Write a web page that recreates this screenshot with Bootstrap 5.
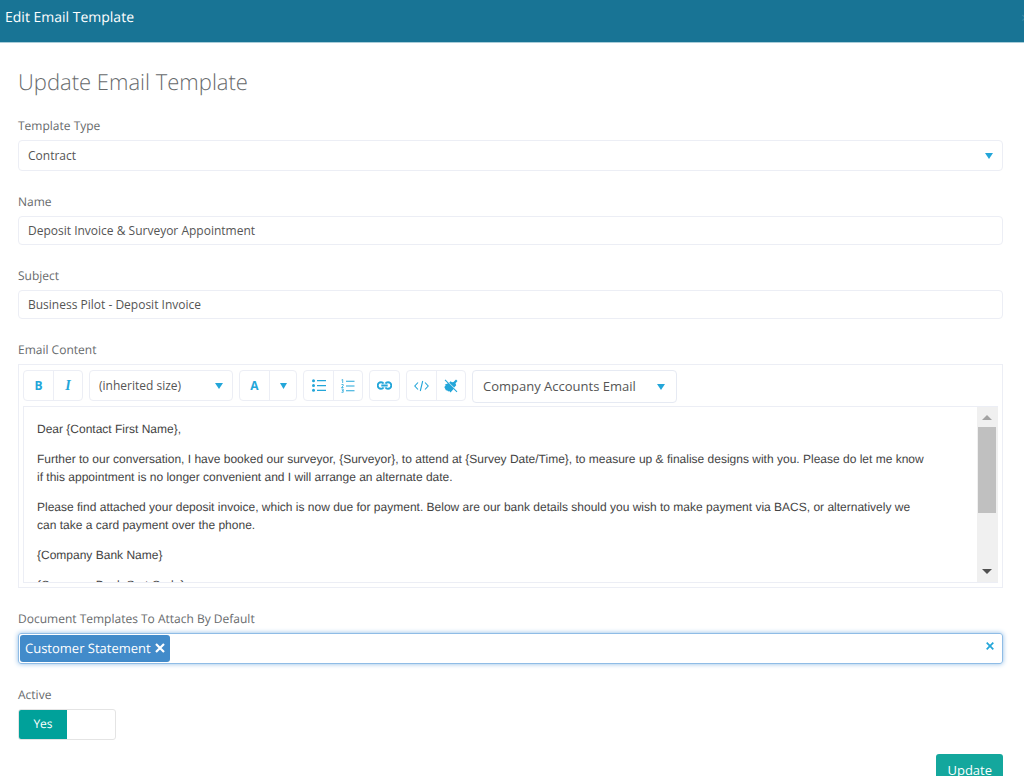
<!DOCTYPE html>
<html lang="en">
<head>
<meta charset="utf-8">
<meta name="viewport" content="width=device-width, initial-scale=1">
<title>Edit Email Template</title>
<link href="https://cdn.jsdelivr.net/npm/bootstrap@5.3.0/dist/css/bootstrap.min.css" rel="stylesheet">
<style>
:root{--accent:#23a6d9;--line:#eceef5}
html{scrollbar-width:none}
body{font-family:"Open Sans",sans-serif;font-size:12px;line-height:20px;color:#676a6c;background:#fff;text-rendering:geometricPrecision}
.title-bar{background:#187495;color:#fff;border-bottom:1px solid #a9cdd9;font-size:14px;padding:8px 0 14px 5px}
.title-bar button{color:#3d8ba6;background:none;border:0;padding:0;width:3px;line-height:16px}
.page-body{padding:24px 21px 12px 18px}
.page-body h1{font-size:22px;font-weight:300;line-height:30px;margin:0 0 19px}
.field{margin-bottom:21px}
.field-label{display:block;margin-bottom:4px;line-height:20px}
.form-control,.form-select{font-size:12px;line-height:19px;color:#555;border-color:var(--line);border-radius:4px;padding:4px 9px}
.form-select{background-image:url("data:image/svg+xml,%3Csvg xmlns='http://www.w3.org/2000/svg' viewBox='0 0 8 6'%3E%3Cpath fill='%2323a6d9' d='M0 0h8L4 6z'/%3E%3C/svg%3E");background-size:8px 6px;background-position:right 9px center}
.type-select{height:31px}
.editor{border:1px solid var(--line);padding:5px 4px 4px}
.tools{min-height:36px;gap:6px}
.tool-group{display:flex;border:1px solid var(--line);border-radius:4px;height:31px}
.tool-group button{width:29px;padding:0;border:0;background:none;color:var(--accent);display:flex;align-items:center;justify-content:center;font-size:12px;font-weight:700}
.tool-group button+button{border-left:1px solid var(--line)}
.tool-group .drop-arrow{width:27px}
.tool-group .serif-i{font-family:"Liberation Serif",serif;font-style:italic;font-size:14px}
.size-select{width:144px;height:31px}
.account-select{width:205px;height:33px;font-size:13px;padding-left:10px;background-position:right 11px center;border:1px solid #e6eaf3}
.writing{border:1px solid var(--line);border-right:0;height:177px}
.message{padding:13px 46px 0 13px;font:12px/18px "Liberation Sans",sans-serif;color:#444;overflow:hidden;outline:0}
.message p{margin:0 0 12px}
.scroller{width:21px;background:#f0f0f0;padding:0 2px 0 1px}
.scroller svg{display:block;width:100%;height:20px}
.scroller .thumb{background:#c0c0c0;height:86px}
.tag-box{border:1px solid #8fbce6;border-radius:3px;box-shadow:0 0 5px #8fbce6;height:31px;padding:1px 8px 1px 1px}
.chip{background:#428bca;color:#fff;border-radius:3px;font-size:13px;height:27px;padding:0 5px 2px 5px;gap:4px}
.plain-x{border:0;background:none;padding:0;display:flex;color:inherit}
.tag-box>.plain-x{color:var(--accent);margin-top:-5px}
.toggle{width:98px;height:31px;border:1px solid #e4e4e4;border-radius:3px;cursor:pointer;overflow:hidden}
.toggle span{width:48px;background:#00a19a;color:#fff;text-align:center;line-height:28px}
.save{background:#14a79d;color:#fff;font-size:13px;line-height:20px;border:0;border-radius:3px;padding:6px 11px;margin-top:14px}
</style>
</head>
<body>
<header class="title-bar d-flex justify-content-between">
  <div>Edit Email Template</div>
  <button type="button" class="overflow-hidden" aria-label="Close">×</button>
</header>
<main class="page-body">
  <form>
    <h1>Update Email Template</h1>
    <div class="field">
      <label class="field-label" for="type">Template Type</label>
      <select id="type" class="form-select type-select"><option>Contract</option></select>
    </div>
    <div class="field">
      <label class="field-label" for="name">Name</label>
      <input id="name" class="form-control" value="Deposit Invoice &amp; Surveyor Appointment">
    </div>
    <div class="field">
      <label class="field-label" for="subject">Subject</label>
      <input id="subject" class="form-control" value="Business Pilot - Deposit Invoice">
    </div>
    <div class="field">
      <div class="field-label" id="content-label">Email Content</div>
      <div class="editor">
        <div class="tools d-flex flex-wrap align-items-start">
          <div class="tool-group">
            <button type="button" aria-label="Bold">B</button>
            <button type="button" class="serif-i" aria-label="Italic">I</button>
          </div>
          <select class="form-select size-select" aria-label="Font size"><option>(inherited size)</option></select>
          <div class="tool-group">
            <button type="button" aria-label="Text colour">A</button>
            <button type="button" class="drop-arrow" aria-label="Choose colour"><svg width="7" height="6" viewBox="0 0 7 6"><path fill="currentColor" d="M0 0h7L3.500 6z"/></svg></button>
          </div>
          <div class="tool-group">
            <button type="button" aria-label="Bulleted list"><svg width="14" height="13" viewBox="0 0 14 13"><g fill="currentColor"><circle cx="1.500" cy="1.700" r="1.500"/><circle cx="1.500" cy="6.500" r="1.500"/><circle cx="1.500" cy="11.300" r="1.500"/><path d="M5 1h9v1.200H5zM5 6h9v1.200H5zM5 10.800h9V12H5z"/></g></svg></button>
            <button type="button" aria-label="Numbered list"><svg width="14" height="14" viewBox="0 0 14 14"><path d="M5 2.200h8.500M5 7h8.500M5 11.800h8.500" stroke="currentColor" stroke-width="1.100"/><path d="M.5 1 1.700.5V4M.5 5.500h1.700v1.300L.5 8.500h2M.5 10h1.700v3.300H.5M1 11.600h1" fill="none" stroke="currentColor" stroke-width=".8"/></svg></button>
          </div>
          <div class="tool-group">
            <button type="button" aria-label="Insert link"><svg width="15" height="9" viewBox="0 0 15 9"><g fill="none" stroke="currentColor" stroke-width="1.900"><path d="M6.500 2.700C6 1.500 5.200 1.200 4 1.200a3.300 3.300 0 0 0 0 6.600c1.200 0 2-.3 2.500-1.500M8.500 2.700C9 1.500 9.800 1.200 11 1.200a3.300 3.300 0 0 1 0 6.600c-1.200 0-2-.3-2.500-1.500M4.300 4.500h6.400"/></g></svg></button>
          </div>
          <div class="tool-group">
            <button type="button" aria-label="View HTML"><svg width="15" height="12" viewBox="0 0 15 12"><path d="M4 2.500.8 6 4 9.500M11 2.500 14.200 6 11 9.500M8.700 1 6.300 11" fill="none" stroke="currentColor" stroke-width="1.100"/></svg></button>
            <button type="button" aria-label="Clear formatting"><svg width="14" height="14" viewBox="0 0 14 14"><path d="M8 3.300 9.500 3 12 .5l1.500 1.500L11.500 4.300l.7 2-2 2.200-5-4.800L6.500 2.300zM4 4.300l5.800 5.500-3.300 3.700L5.200 12l-1 .6L3 11.200l-1 .2L.3 8l1.400-1.500L.8 5.800z" fill="currentColor"/><path d="m1 .8 12 12" stroke="currentColor" stroke-width="1.100"/></svg></button>
          </div>
          <select class="form-select account-select" aria-label="Sender account"><option>Company Accounts Email</option></select>
        </div>
        <div class="writing d-flex">
          <div class="message flex-grow-1" contenteditable="true" role="textbox" aria-multiline="true" aria-labelledby="content-label" spellcheck="false">
            <p>Dear {Contact First Name},</p>
            <p>Further to our conversation, I have booked our surveyor, {Surveyor}, to attend at {Survey Date/Time}, to measure up &amp; finalise designs with you. Please do let me know if this appointment is no longer convenient and I will arrange an alternate date.</p>
            <p>Please find attached your deposit invoice, which is now due for payment. Below are our bank details should you wish to make payment via BACS, or alternatively we can take a card payment over the phone.</p>
            <p>{Company Bank Name}</p>
            <p>{Company Bank Sort Code}</p>
          </div>
          <div class="scroller d-flex flex-column flex-shrink-0" aria-hidden="true">
            <svg viewBox="0 0 18 20"><path fill="#a3a3a3" d="M4 13h10L9 8z"/></svg>
            <div class="thumb"></div>
            <svg class="mt-auto" viewBox="0 0 18 20"><path fill="#505050" d="M4 7h10l-5 5z"/></svg>
          </div>
        </div>
      </div>
    </div>
    <div class="field">
      <div class="field-label">Document Templates To Attach By Default</div>
      <div class="tag-box d-flex align-items-center justify-content-between">
        <div class="chip d-flex align-items-center">Customer Statement
          <button type="button" class="plain-x" aria-label="Remove Customer Statement"><svg width="10" height="10" viewBox="0 0 10 10"><path d="m1 1 8 8M9 1 1 9" stroke="currentColor" stroke-width="2.200"/></svg></button>
        </div>
        <button type="button" class="plain-x" aria-label="Clear all"><svg width="8" height="8" viewBox="0 0 8 8"><path d="m.7.7 6.600 6.600M7.300.7.7 7.300" stroke="currentColor" stroke-width="1.700"/></svg></button>
      </div>
    </div>
    <div>
      <label class="field-label" for="active">Active</label>
      <input type="checkbox" id="active" class="visually-hidden" checked>
      <label class="toggle d-flex" for="active"><span>Yes</span></label>
    </div>
    <div class="d-flex justify-content-end">
      <button type="submit" class="save">Update</button>
    </div>
  </form>
</main>
<script src="https://cdn.jsdelivr.net/npm/bootstrap@5.3.0/dist/js/bootstrap.bundle.min.js"></script>
</body>
</html>
